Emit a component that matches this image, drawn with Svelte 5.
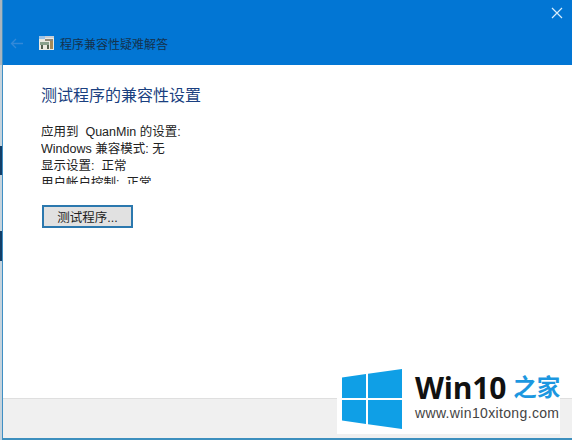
<script>
  let settings = [
    "应用到  QuanMin 的设置:",
    "Windows 兼容模式: 无",
    "显示设置:  正常",
    "用户帐户控制:  正常"
  ];
</script>

<div class="desk">
  <div class="edge">
    <span class="e1"></span>
    <span class="e2"></span>
    <span class="e3"></span>
    <span class="e4"></span>
    <span class="e5"></span>
    <span class="e6"></span>
  </div>
  <div class="window">
    <header class="titlebar">
      <div class="closerow">
        <svg class="close" width="12" height="12" viewBox="0 0 12 12">
          <path d="M1 1 L11 11 M11 1 L1 11" stroke="#d8eefc" stroke-width="1.2" fill="none" />
        </svg>
      </div>
      <div class="navrow">
        <svg class="back" width="13" height="11" viewBox="0 0 13 11">
          <path d="M13 5.5 H1.5 M6 1 L1.5 5.5 L6 10" stroke="#3389d8" stroke-width="1.3" fill="none" />
        </svg>
        <svg class="appicon" width="15" height="14" viewBox="0 0 15 14">
          <rect x="0" y="0" width="15" height="14" fill="#eceae2" />
          <rect x="0" y="0" width="6" height="3" fill="#9cc3e6" />
          <rect x="6" y="0" width="9" height="2" fill="#c9ced4" />
          <rect x="6" y="3" width="8" height="2" fill="#8f8778" />
          <rect x="1" y="6" width="9" height="3" fill="#8aa08c" />
          <rect x="2" y="9" width="2" height="4" fill="#55604f" />
          <rect x="8" y="9" width="2" height="4" fill="#55604f" />
          <rect x="11" y="5" width="3" height="8" fill="#a58a58" />
        </svg>
        <span class="apptitle">程序兼容性疑难解答</span>
      </div>
    </header>

    <main class="content">
      <h1>测试程序的兼容性设置</h1>
      <div class="settings">
        {#each settings as line}
          <div class="line">{line}</div>
        {/each}
      </div>
      <button class="test">测试程序...</button>
    </main>

    <footer class="footer"></footer>
  </div>

  <div class="mark">
    <svg class="logo" width="60" height="60" viewBox="0 0 60 60">
      <path d="M0 8.5 L24 5 V29 H0 Z M26 4.7 L60 0 V29 H26 Z M0 31 H24 V55 L0 51.5 Z M26 31 H60 V60 L26 55.3 Z" fill="#0f9fe6" />
    </svg>
    <div class="marktext">
      <div class="brand"><span class="w10">Win10</span><span class="zh">之家</span></div>
      <div class="url">www.win10xitong.com</div>
    </div>
  </div>
</div>

<style>
  :global(body) {
    margin: 0;
    background: #fff;
  }

  .desk {
    width: 572px;
    height: 440px;
    display: flex;
    position: relative;
    overflow: hidden;
    font-family: "Liberation Sans", "Noto Sans CJK SC", sans-serif;
  }

  .edge {
    width: 2px;
    flex: none;
    display: flex;
    flex-direction: column;
  }
  .e1 { height: 65px; background: #a9b4bd; }
  .e2 { height: 81px; background: #c5d3dd; }
  .e3 { height: 29px; background: #123e68; }
  .e4 { height: 56px; background: #c5d3dd; }
  .e5 { height: 30px; background: #123e68; }
  .e6 { flex: 1; background: #c5d3dd; }

  .window {
    flex: 1;
    display: flex;
    flex-direction: column;
    border-left: 1px solid #3f8fc4;
    border-bottom: 2px solid #3d8fbe;
    min-width: 0;
  }

  .titlebar {
    height: 65px;
    flex: none;
    background: #0276d4;
    display: flex;
    flex-direction: column;
  }

  .closerow {
    height: 26px;
    display: flex;
    justify-content: flex-end;
    align-items: center;
    padding-right: 9px;
  }

  .navrow {
    display: flex;
    align-items: center;
    padding-left: 7px;
    margin-top: 9px;
    height: 16px;
  }

  .back { margin-right: 16px; }
  .appicon { margin-right: 6px; }

  .apptitle {
    font-size: 12px;
    color: #14324e;
  }

  .content {
    flex: 1;
    background: #fff;
    padding: 20px 0 0 38px;
  }

  h1 {
    margin: 0;
    font-size: 16px;
    font-weight: normal;
    line-height: 22px;
    color: #1a3f80;
  }

  .settings {
    margin-top: 17px;
    height: 60px;
    overflow: hidden;
    font-size: 12.5px;
    line-height: 17px;
    color: #222;
    white-space: pre;
  }

  .test {
    display: block;
    margin: 21px 0 0 1px;
    width: 91px;
    height: 23px;
    padding: 0 0 2px;
    border: 2px solid #2b78ae;
    background: #e1e1e1;
    color: #222;
    font: inherit;
    font-size: 12.5px;
  }

  .footer {
    height: 39px;
    flex: none;
    background: #f0f0f0;
    border-top: 1px solid #dfdfdf;
  }

  .mark {
    position: absolute;
    left: 337px;
    top: 364px;
    width: 223px;
    height: 70px;
    background: #fff;
    display: flex;
    align-items: center;
    gap: 13px;
    padding-left: 5px;
    box-sizing: border-box;
  }

  .logo { flex: none; }

  .marktext {
    flex: none;
    white-space: nowrap;
    padding-bottom: 5px;
  }

  .brand {
    display: flex;
    align-items: center;
    gap: 7px;
    line-height: 30px;
  }

  .w10 {
    font-size: 30px;
    font-weight: bold;
    color: #111;
    font-family: "Open Sans", "Liberation Sans", sans-serif;
    letter-spacing: -0.2px;
  }

  .zh {
    font-size: 23.5px;
    font-weight: bold;
    color: #1c97e0;
  }

  .url {
    font-size: 14px;
    color: #444;
    letter-spacing: 0.35px;
    line-height: 16px;
    margin-top: 2px;
  }
</style>
